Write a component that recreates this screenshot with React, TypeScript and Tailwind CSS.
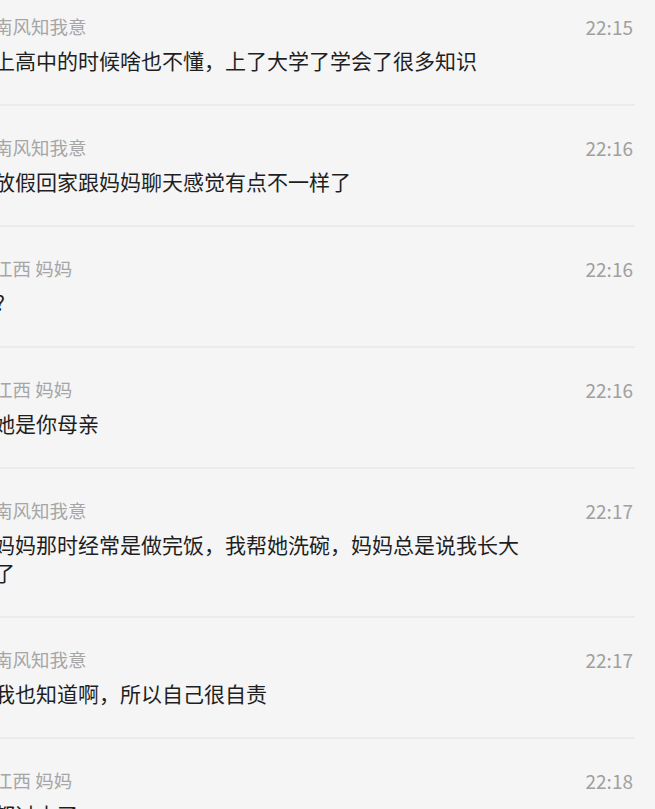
const messages = [
  { name: "南风知我意", time: "22:15", text: "上高中的时候啥也不懂，上了大学了学会了很多知识" },
  { name: "南风知我意", time: "22:16", text: "放假回家跟妈妈聊天感觉有点不一样了" },
  { name: "江西 妈妈", time: "22:16", text: "?" },
  { name: "江西 妈妈", time: "22:16", text: "她是你母亲" },
  { name: "南风知我意", time: "22:17", text: "妈妈那时经常是做完饭，我帮她洗碗，妈妈总是说我长大了" },
  { name: "南风知我意", time: "22:17", text: "我也知道啊，所以自己很自责" },
  { name: "江西 妈妈", time: "22:18", text: "都过去了" },
];

export default function App() {
  return (
    <div
      className="h-[809px] overflow-hidden bg-[#f5f5f5]"
      style={{ fontFamily: '"Noto Sans CJK SC", "Noto Sans", sans-serif' }}
    >
      <div className="-ml-[6px] -mt-[15px] w-[641px]">
        {messages.map((m, i) => (
          <div key={i} className="border-b-2 border-[#ebebeb] pt-[29px] pb-[30px]">
            <div className="flex items-center justify-between h-[26px] text-[18.5px] text-[#a6a6a6]">
              <span>{m.name}</span>
              <span className="pr-[2px] text-[19px] text-[#a0a0a0]">{m.time}</span>
            </div>
            <p className="mt-[6px] w-[540px] text-[21px] leading-[28px] text-[#1f1f1f]">
              {m.text === "?" ? <span className="inline-block pl-[1px]">?</span> : m.text}
            </p>
          </div>
        ))}
      </div>
    </div>
  );
}
